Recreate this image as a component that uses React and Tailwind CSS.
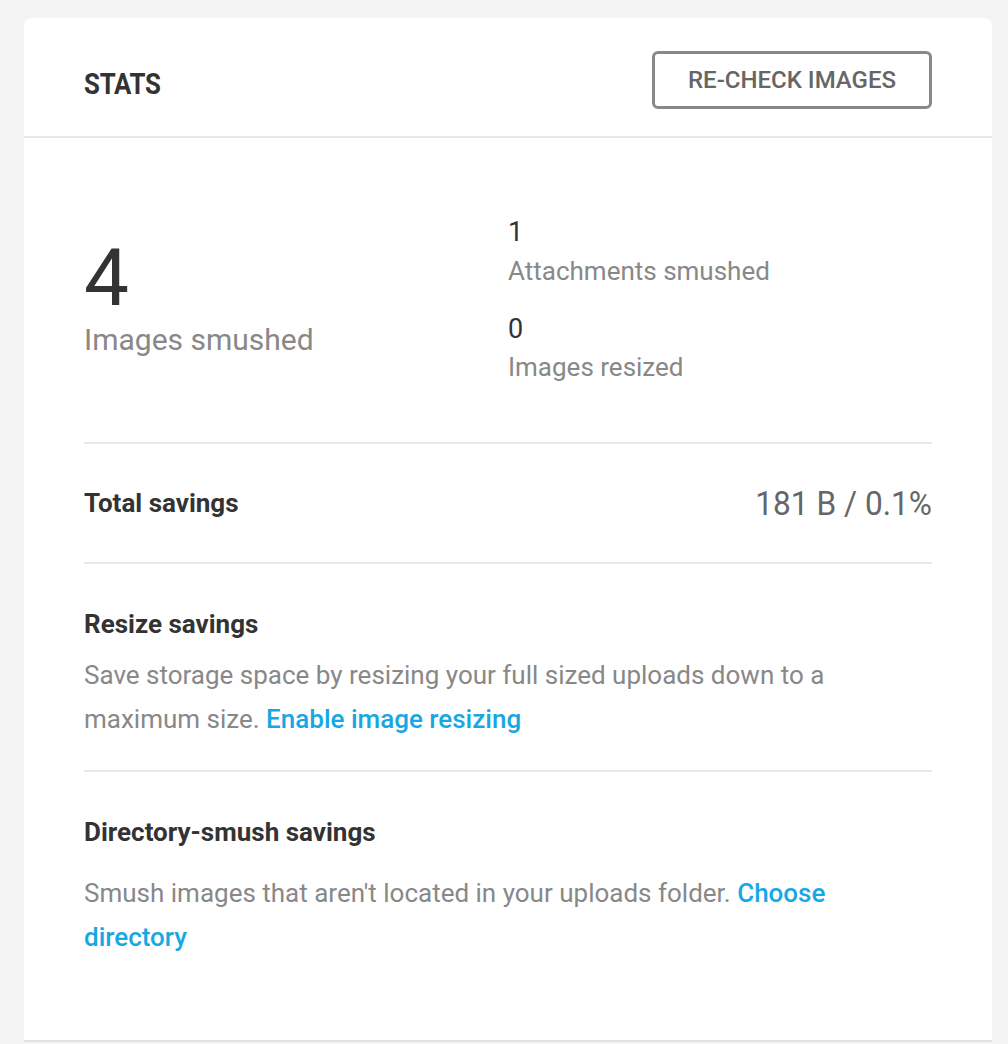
export default function App() {
  return (
    <div className="min-h-[1044px] bg-[#f3f3f3] pt-[18px] pl-[24px] pr-[16px] font-['Roboto',sans-serif]">
      <div className="bg-white rounded-t-[8px] border-b-2 border-[#e2e2e2]">
        {/* Header */}
        <div className="flex items-start justify-between h-[120px] px-[60px] border-b-2 border-[#e8e8e8]">
          <h2 className="mt-[51px] text-[30px] font-bold text-[#333] tracking-[-0.3px] scale-x-[0.86] origin-left leading-none">STATS</h2>
          <button className="mt-[33px] w-[280px] h-[58px] border-[3px] border-[#888] rounded-[6px] text-[24px] font-medium text-[#666] leading-none">
            RE-CHECK IMAGES
          </button>
        </div>
        <div className="px-[60px]">
          {/* Stats */}
          <div className="grid grid-cols-2 h-[306px] border-b-2 border-[#e8e8e8]">
            <div className="flex flex-col pt-[100px]">
              <div className="text-[80px] leading-[80px] text-[#333]">4</div>
              <div className="text-[30px] leading-[40px] text-[#888] mt-[2px]">Images smushed</div>
            </div>
            <div className="flex flex-col pt-[78px]">
              <div className="text-[27px] leading-[32px] text-[#333]">1</div>
              <div className="text-[26px] leading-[40px] text-[#888] mt-[3px]">Attachments smushed</div>
              <div className="text-[27px] leading-[32px] text-[#333] mt-[22px]">0</div>
              <div className="text-[26px] leading-[40px] text-[#888] mt-[2px]">Images resized</div>
            </div>
          </div>
          {/* Total savings */}
          <div className="flex items-center justify-between h-[120px] border-b-2 border-[#e8e8e8]">
            <div className="text-[26px] font-bold text-[#333]">Total savings</div>
            <div className="text-[34px] text-[#666] scale-x-[0.93] origin-right">181 B / 0.1%</div>
          </div>
          {/* Resize savings */}
          <div className="pt-[42px] pb-[29px] border-b-2 border-[#e8e8e8]">
            <div className="text-[26px] font-bold text-[#333] leading-[36px]">Resize savings</div>
            <p className="text-[26px] leading-[44px] text-[#888] mt-[11px] pr-[80px]">
              Save storage space by resizing your full sized uploads down to a maximum size.{" "}
              <a className="text-[#17a8e3] font-medium">Enable image resizing</a>
            </p>
          </div>
          {/* Directory smush */}
          <div className="pt-[42px] h-[268px]">
            <div className="text-[26px] font-bold text-[#333] leading-[36px]">Directory-smush savings</div>
            <p className="text-[26px] leading-[44px] text-[#888] mt-[21px] pr-[100px]">
              Smush images that aren't located in your uploads folder.{" "}
              <a className="text-[#17a8e3] font-medium">Choose directory</a>
            </p>
          </div>
        </div>
      </div>
    </div>
  );
}
